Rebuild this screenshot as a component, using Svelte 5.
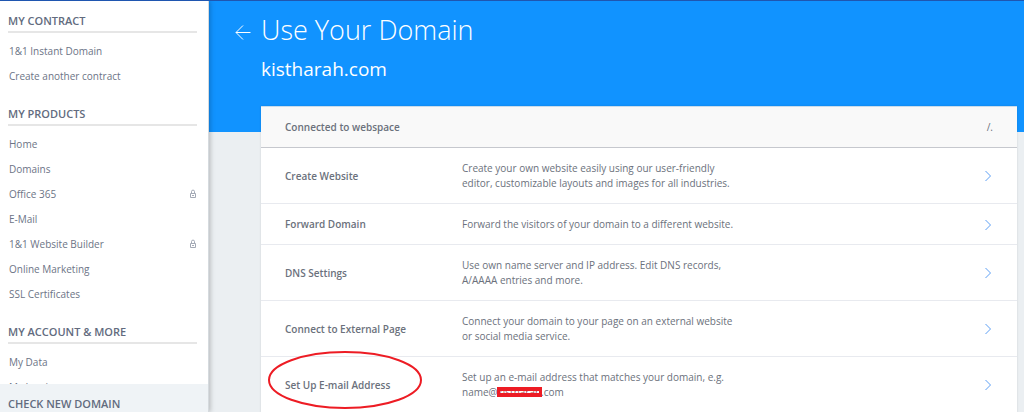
<script lang="ts">
  interface NavItem {
    label: string;
    locked?: boolean;
  }

  interface NavSection {
    title: string;
    items: NavItem[];
  }

  interface Option {
    title: string;
    text: string[];
    marked?: boolean;
  }

  const domain = 'kistharah.com';

  const sections: NavSection[] = [
    {
      title: 'MY CONTRACT',
      items: [{ label: '1&1 Instant Domain' }, { label: 'Create another contract' }],
    },
    {
      title: 'MY PRODUCTS',
      items: [
        { label: 'Home' },
        { label: 'Domains' },
        { label: 'Office 365', locked: true },
        { label: 'E-Mail' },
        { label: '1&1 Website Builder', locked: true },
        { label: 'Online Marketing' },
        { label: 'SSL Certificates' },
      ],
    },
    {
      title: 'MY ACCOUNT & MORE',
      items: [{ label: 'My Data' }, { label: 'My Invoices' }],
    },
  ];

  const options: Option[] = [
    {
      title: 'Create Website',
      text: [
        'Create your own website easily using our user-friendly',
        'editor, customizable layouts and images for all industries.',
      ],
    },
    {
      title: 'Forward Domain',
      text: ['Forward the visitors of your domain to a different website.'],
    },
    {
      title: 'DNS Settings',
      text: ['Use own name server and IP address. Edit DNS records,', 'A/AAAA entries and more.'],
    },
    {
      title: 'Connect to External Page',
      text: ['Connect your domain to your page on an external website', 'or social media service.'],
    },
    {
      title: 'Set Up E-mail Address',
      text: ['Set up an e-mail address that matches your domain, e.g.'],
      marked: true,
    },
  ];
</script>

<div class="page">
  <aside class="sidebar">
    <nav class="nav">
      {#each sections as section}
        <section class="nav-section">
          <h2 class="nav-title">{section.title}</h2>
          <ul class="nav-list">
            {#each section.items as item}
              <li>
                <a class="nav-link" href="#top">
                  {item.label}
                  {#if item.locked}
                    <svg class="lock" viewBox="0 0 8 10" aria-hidden="true">
                      <path d="M2.5 4.5V2.6a1.5 1.5 0 0 1 3 0v1.9M1.5 4.5h5v4h-5zM3 6.5h2" />
                    </svg>
                  {/if}
                </a>
              </li>
            {/each}
          </ul>
        </section>
      {/each}
    </nav>
    <h2 class="check-title">CHECK NEW DOMAIN</h2>
  </aside>

  <main class="main">
    <header class="hero">
      <a class="back" href="#top" aria-label="Back">
        <svg viewBox="0 0 16 16" aria-hidden="true">
          <path d="M15.5 8.5H1M8 1.5l-7 7 7 7" />
        </svg>
      </a>
      <div>
        <h1 class="title">Use Your Domain</h1>
        <p class="domain">{domain}</p>
      </div>
    </header>

    <div class="card">
      <div class="card-head">
        <span>Connected to webspace</span>
        <span class="path">/.</span>
      </div>
      {#each options as option}
        <a class="option" href="#top">
          <span class="option-title">
            {option.title}
            {#if option.marked}
              <svg class="ring" viewBox="0 0 156 60" aria-hidden="true">
                <ellipse cx="78" cy="30" rx="76" ry="28" />
              </svg>
            {/if}
          </span>
          <span class="option-text">
            {#each option.text as line}
              <span class="line">{line}</span>
            {/each}
            {#if option.marked}
              <span class="line">name@<span class="redacted">kistharah</span>.com</span>
            {/if}
          </span>
          <svg class="chevron" viewBox="0 0 8 12" aria-hidden="true">
            <path d="M1.5 1l5 5-5 5" />
          </svg>
        </a>
      {/each}
    </div>
  </main>
</div>

<style>
  :global(body) {
    background: #ebeff2;
    font-family: 'Open Sans', 'Noto Sans', sans-serif;
  }

  .page {
    display: flex;
    height: 100vh;
    box-sizing: border-box;
    overflow: hidden;
    border-top: 1px solid #1f56b0;
    font-size: 10px;
    color: #6b717c;
  }

  h1,
  h2,
  p,
  ul {
    margin: 0;
    padding: 0;
  }

  a {
    color: inherit;
    text-decoration: none;
  }

  .sidebar {
    position: relative;
    z-index: 1;
    display: flex;
    flex-direction: column;
    flex: 0 0 209px;
    background: #fff;
    border-right: 1px solid #d5dade;
    box-shadow: 1px 0 5px rgba(0, 0, 0, 0.25);
    box-sizing: border-box;
    color: #6c7486;
  }

  .nav {
    flex: 1;
    min-height: 0;
    overflow: hidden;
    padding: 10px 11px 0 8px;
  }

  .nav-section {
    margin-bottom: 16px;
  }

  .nav-title,
  .check-title {
    font-size: 11px;
    font-weight: 600;
    line-height: 20px;
    color: #626b7e;
  }

  .nav-title {
    border-bottom: 2px solid #e6e6e6;
    margin-bottom: 5px;
  }

  .nav-list {
    list-style: none;
  }

  .nav-link {
    display: flex;
    align-items: center;
    justify-content: space-between;
    height: 25px;
    padding-left: 1px;
  }

  .lock {
    width: 8px;
    height: 10px;
    fill: none;
    stroke: #a3a9b5;
  }

  .check-title {
    padding: 10px 8px 0;
    height: 18px;
    background: #eff3f6;
  }

  .main {
    flex: 1;
    min-width: 0;
  }

  .hero {
    display: flex;
    height: 131px;
    padding-left: 26px;
    box-sizing: border-box;
    background: #1193ff;
    color: #fff;
  }

  .back {
    width: 26px;
    padding-top: 23px;
  }

  .back svg {
    display: block;
    width: 16px;
    height: 16px;
    fill: none;
    stroke: #fff;
  }

  .title {
    padding-top: 9px;
    font-size: 27px;
    font-weight: 300;
    line-height: 40px;
  }

  .domain {
    padding-top: 5px;
    font-size: 19px;
    line-height: 28px;
  }

  .card {
    margin: -26px 7px 0 52px;
    background: #fff;
    border-top: 1px solid #c9dcec;
    box-shadow: 0 0 2px rgba(0, 0, 0, 0.12);
  }

  .card-head {
    display: flex;
    align-items: center;
    justify-content: space-between;
    height: 40px;
    padding: 0 24px;
    background: #f9f9f9;
    border-bottom: 1px solid #c6c8ce;
    font-weight: 600;
  }

  .path {
    font-weight: 400;
  }

  .option {
    display: flex;
    align-items: center;
    padding: 13px 25px 12px 24px;
    border-bottom: 1px solid #e8eaef;
    line-height: 15px;
  }

  .option-title {
    position: relative;
    flex: 0 0 177px;
    font-weight: 600;
  }

  .option-text {
    flex: 1;
  }

  .line {
    display: block;
  }

  .chevron {
    width: 8px;
    height: 12px;
    fill: none;
    stroke: #5c9ff5;
  }

  /* hand-drawn marker around the row title */
  .ring {
    position: absolute;
    left: -18px;
    top: -28px;
    width: 156px;
    height: 60px;
    fill: none;
    stroke: #ed1c24;
    stroke-width: 2;
  }

  .redacted {
    position: relative;
    color: #b5525c;
  }

  .redacted::after {
    content: '';
    position: absolute;
    inset: 2px -1px;
    border: solid #ed1c24;
    border-width: 4px 3px;
  }
</style>
